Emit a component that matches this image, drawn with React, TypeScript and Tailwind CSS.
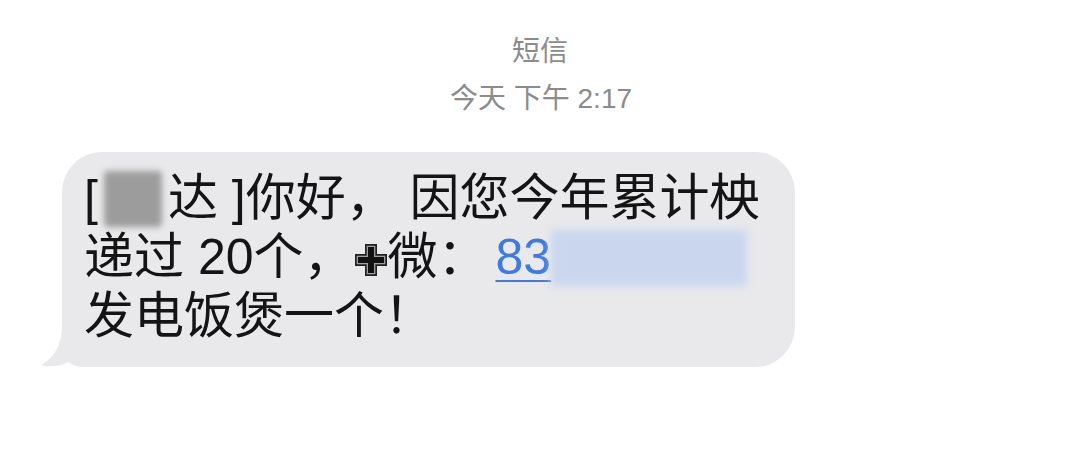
import React from 'react';

const font = '"Liberation Sans", "Noto Sans CJK SC", sans-serif';

function Cross() {
  const d = 'M14 4 H20 V14 H30 V20 H20 V30 H14 V20 H4 V14 H14 Z';
  return (
    <svg width="34" height="34" viewBox="0 0 34 34" className="mt-[4px]">
      <path d={d} fill="#111" stroke="#222" strokeWidth="6" />
      <path d={d} fill="#111" stroke="#a0a0a0" strokeWidth="2.6" />
      <path d={d} fill="#111" />
    </svg>
  );
}

export default function App() {
  return (
    <main
      className="w-[1080px] h-[471px] bg-white overflow-hidden flex flex-col"
      style={{ fontFamily: font }}
    >
      {/* header */}
      <div className="flex flex-col items-center pt-[38px] text-[#8b8b8b] leading-none">
        <div className="text-[28px]">短信</div>
        <div className="text-[28px] mt-[19px] ml-[2px]">今天 下午 2:17</div>
      </div>

      {/* bubble */}
      <div className="relative ml-[62px] mt-[39px] w-[733px] h-[215px]">
        <svg
          className="absolute left-[-22px] bottom-0"
          width="60"
          height="40"
          viewBox="0 0 60 40"
        >
          <path
            d="M22 0 L60 0 L60 40 L45 40 C38 40 32 38 28 35 C22 39 12 40 4 39 C2 38.8 1.5 38 3 37 C12 31 21 22 22 0 Z"
            fill="#e9e9eb"
          />
        </svg>
        <div className="absolute inset-0 rounded-[40px] bg-[#e9e9eb]" />
        <div className="relative pl-[22px] pt-[17px] text-[50px] leading-[59px] text-[#141414]">
          <div className="flex items-center">
            <span>[</span>
            <span className="inline-block w-[58px] h-[56px] mx-[6px] bg-[#9c9c9c] blur-[3px] rounded-[4px]" />
            <span>达 ]你好，&nbsp;因您今年累计柍</span>
          </div>
          <div className="flex items-center">
            <span>递过 20个，</span>
            <Cross />
            <span>微：</span>
            <span className="ml-[8px] text-[#3d7be0] underline decoration-[2px] underline-offset-[6px]">83</span>
            <span className="inline-block w-[196px] h-[56px] bg-[#c9d6ee] blur-[4px]" />
          </div>
          <div>发电饭煲一个！</div>
        </div>
      </div>
    </main>
  );
}
